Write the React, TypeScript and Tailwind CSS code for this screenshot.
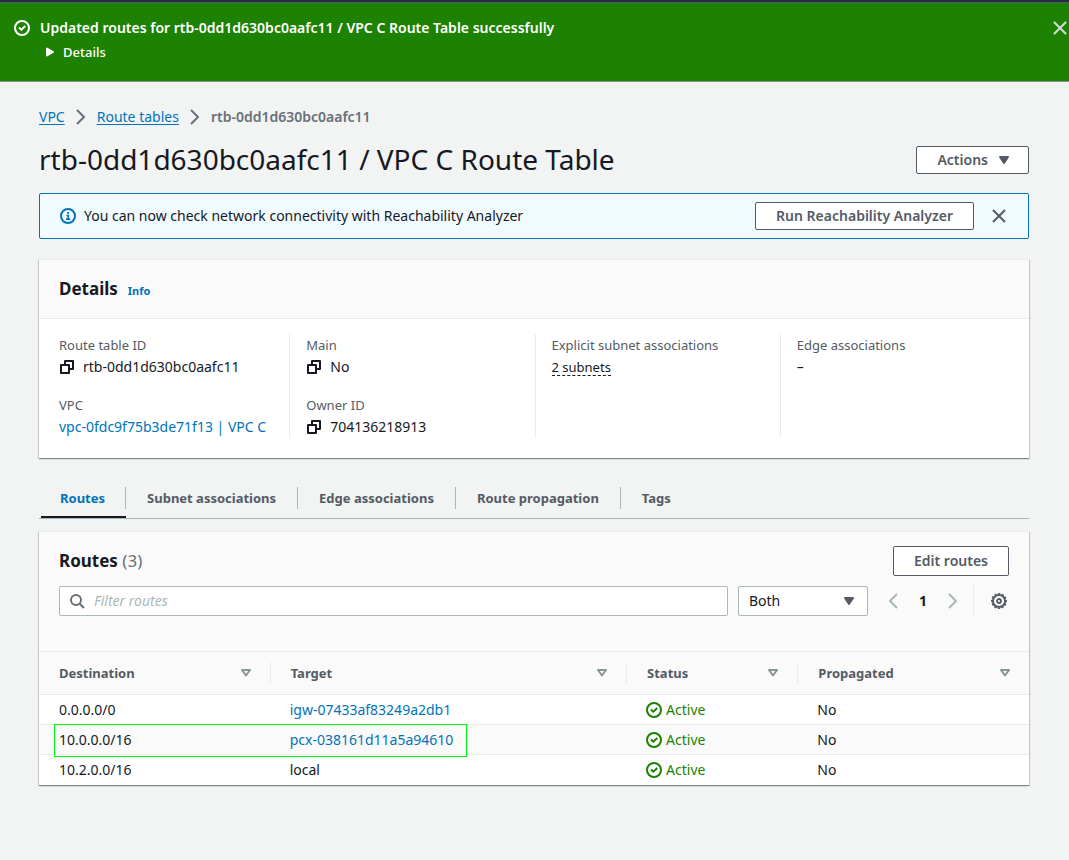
import type { ReactNode } from "react";

type IconProps = { children: ReactNode; className?: string; width?: number };

function Icon({ children, className = "", width = 2 }: IconProps) {
  return (
    <svg
      viewBox="0 0 16 16"
      className={`size-4 shrink-0 ${className}`}
      fill="none"
      stroke="currentColor"
      strokeWidth={width}
      strokeLinejoin="round"
      aria-hidden="true"
    >
      {children}
    </svg>
  );
}

const CheckCircle = ({ className = "" }: { className?: string }) => (
  <Icon className={className}>
    <circle cx="8" cy="8" r="7" />
    <path d="M4.9 7.6l2.4 2.1 4-3.6" strokeLinejoin="miter" />
  </Icon>
);

const Close = () => (
  <Icon>
    <path d="M2 2l12 12M14 2L2 14" />
  </Icon>
);

const Info = () => (
  <Icon className="text-[#0073bb]">
    <circle cx="8" cy="8" r="7" />
    <path d="M6 11.1h4.2M6.4 7.5H8.2V11M7 4.9h2" strokeWidth="1.6" strokeLinejoin="miter" />
  </Icon>
);

const Copy = () => (
  <Icon>
    <path d="M2 6h8v8H2z" />
    <path d="M6 6V2h8v8h-4" />
  </Icon>
);

const Chevron = ({ flip = false, className = "" }: { flip?: boolean; className?: string }) => (
  <Icon className={className}>
    <path d={flip ? "M12 1L5 8l7 7" : "M4 1l7 7-7 7"} />
  </Icon>
);

const CaretDown = ({ className = "" }: { className?: string }) => (
  <Icon className={className}>
    <path d="M4 5h8l-4 6z" fill="currentColor" />
  </Icon>
);

const SortCaret = () => (
  <Icon className="text-[#879596]">
    <path d="M4 5h8l-4 5.5z" />
  </Icon>
);

const Search = () => (
  <Icon className="text-[#687078]">
    <circle cx="7" cy="7" r="5" />
    <path d="M10.7 10.7L15 15" />
  </Icon>
);

const Gear = () => (
  <Icon width={2}>
    <circle cx="8" cy="8" r="6.1" />
    <circle cx="8" cy="8" r="7.3" strokeWidth="1.4" strokeDasharray="2.2 1.62" strokeDashoffset="1.1" />
    <circle cx="8" cy="8" r="2" strokeWidth="1.8" />
  </Icon>
);

const card =
  "border-t border-[#eaeded] bg-white shadow-[0_1px_1px_0_rgba(0,28,36,0.3),1px_1px_1px_0_rgba(0,28,36,0.15),-1px_1px_1px_0_rgba(0,28,36,0.15)]";
const button =
  "flex items-center justify-center rounded-[2px] border border-[#545b64] bg-white font-semibold text-[#545b64]";

function Field({ label, children }: { label: string; children: ReactNode }) {
  return (
    <div>
      <dt className="text-[13px] leading-[22px] text-[#545b64]">{label}</dt>
      <dd className="flex h-[22px] items-center">{children}</dd>
    </div>
  );
}

function Copyable({ text }: { text: string }) {
  return (
    <>
      <button type="button" aria-label={`Copy ${text}`} className="mr-2">
        <Copy />
      </button>
      {text}
    </>
  );
}

const tabs = ["Routes", "Subnet associations", "Edge associations", "Route propagation", "Tags"];

const columns = ["Destination", "Target", "Status", "Propagated"];

const routes = [
  { destination: "0.0.0.0/0", target: "igw-07433af83249a2db1", link: true, marked: false },
  { destination: "10.0.0.0/16", target: "pcx-038161d11a5a94610", link: true, marked: true },
  { destination: "10.2.0.0/16", target: "local", link: false, marked: false },
];

export default function App() {
  return (
    <div className="min-h-screen bg-[#f2f3f3] pb-8 font-['Noto_Sans',sans-serif] text-[14px] leading-[22px] text-[#16191f]">
      <div className="h-[3px] border-b border-[#545b64] bg-[#232f3e]" />
      <section className="flex h-[79px] items-start gap-2.5 border-b border-[#879596] bg-[#1d8102] pt-3.5 pl-3.5 text-white">
        <CheckCircle className="mt-[3px]" />
        <div className="flex-1">
          <p className="font-semibold">
            Updated routes for rtb-0dd1d630bc0aafc11 / VPC C Route Table successfully
          </p>
          <button type="button" className="mt-0.5 flex items-center gap-[5px] pl-0.5 text-[13px] leading-[22px] font-medium">
            <Icon>
              <path d="M5 4.5v7L11 8z" fill="currentColor" />
            </Icon>
            Details
          </button>
        </div>
        <button type="button" aria-label="Dismiss" className="mt-[3px] mr-px text-[#d5dbdb]">
          <Close />
        </button>
      </section>

      <main className="px-10">
        <div className="-ml-px pt-6">
          <nav aria-label="Breadcrumb" className="flex items-center gap-2">
            <a href="#vpc" className="text-[#0073bb] underline underline-offset-2">VPC</a>
            <Chevron className="text-[#687078]" />
            <a href="#route-tables" className="text-[#0073bb] underline underline-offset-2">Route tables</a>
            <Chevron className="text-[#687078]" />
            <span className="font-semibold text-[#687078]">rtb-0dd1d630bc0aafc11</span>
          </nav>
          <div className="mt-3.5 flex items-center justify-between">
            <h1 className="pb-0.5 text-[28px] leading-[34px]">rtb-0dd1d630bc0aafc11 / VPC C Route Table</h1>
            <button type="button" className={`${button} h-7 gap-2 pr-4 pl-5`}>
              Actions
              <CaretDown />
            </button>
          </div>
        </div>

        <section className="-ml-px mt-[15px] flex h-[46px] items-center rounded-[2px] border border-[#0073bb] bg-[#f1faff] pr-[21px] pl-5">
          <Info />
          <p className="ml-2 flex-1">You can now check network connectivity with Reachability Analyzer</p>
          <button type="button" className={`${button} h-7 px-5`}>
            Run Reachability Analyzer
          </button>
          <button type="button" aria-label="Dismiss" className="ml-[17px] text-[#545b64]">
            <Close />
          </button>
        </section>

        <section className={`${card} -ml-px mt-5`}>
          <header className="flex h-[59px] items-baseline gap-2.5 border-b border-[#eaeded] bg-[#fafafa] px-5 pt-[17px]">
            <h2 className="text-[17px] leading-6 font-bold">Details</h2>
            <a href="#info" className="text-[11px] leading-5 font-bold text-[#0073bb]">Info</a>
          </header>
          <dl className="grid grid-cols-4 divide-x divide-[#eaeded] pt-[15px] pr-[3px] pb-5 pl-1.5">
            <div className="space-y-4 pl-3.5">
              <Field label="Route table ID">
                <Copyable text="rtb-0dd1d630bc0aafc11" />
              </Field>
              <Field label="VPC">
                <a href="#vpc" className="text-[#0073bb]">vpc-0fdc9f75b3de71f13 | VPC C</a>
              </Field>
            </div>
            <div className="space-y-4 pl-4">
              <Field label="Main">
                <Copyable text="No" />
              </Field>
              <Field label="Owner ID">
                <Copyable text="704136218913" />
              </Field>
            </div>
            <div className="pl-4">
              <Field label="Explicit subnet associations">
                <button type="button" className="border-b border-dashed border-[#16191f] text-[13px] leading-4">
                  2 subnets
                </button>
              </Field>
            </div>
            <div className="pl-4">
              <Field label="Edge associations">–</Field>
            </div>
          </dl>
        </section>

        <div role="tablist" className="-ml-px mt-6 flex border-b border-[#aab7b8] text-[13px]">
          {tabs.map((tab, i) => (
            <button
              key={tab}
              type="button"
              role="tab"
              aria-selected={i === 0}
              className={`flex h-9 items-start pt-[5px] font-bold ${
                i === 0 ? "ml-0.5 border-b-2 border-[#16191f] text-[#0073bb]" : "text-[#545b64]"
              }`}
            >
              <span
                className={`flex h-[22px] items-center ${i === 0 ? "pr-5 pl-[19px]" : "px-[21px]"} ${
                  i < tabs.length - 1 ? "border-r border-[#aab7b8]" : ""
                }`}
              >
                {tab}
              </span>
            </button>
          ))}
        </div>

        <section className={`${card} -ml-px mt-3`}>
          <div className="bg-[#fafafa] px-5 pt-3.5 pb-[35px]">
            <div className="flex items-center justify-between">
              <h2 className="text-[17px] leading-6 font-bold">
                Routes <span className="font-normal text-[#687078]">(3)</span>
              </h2>
              <button type="button" className={`${button} h-[30px] px-5`}>
                Edit routes
              </button>
            </div>
            <div className="mt-2.5 flex items-center">
              <label className="flex h-[30px] flex-1 items-center gap-[9px] rounded-[2px] border border-[#aab7b8] bg-white px-[9px]">
                <Search />
                <input
                  type="text"
                  aria-label="Filter routes"
                  placeholder="Filter routes"
                  className="min-w-0 flex-1 outline-none placeholder:text-[#aab7b8] placeholder:italic"
                />
              </label>
              <div className="relative ml-2.5 w-[130px]">
                <select
                  aria-label="Route type"
                  className="h-[30px] w-full appearance-none rounded-[2px] border border-[#aab7b8] bg-white pl-2.5"
                >
                  <option>Both</option>
                </select>
                <CaretDown className="pointer-events-none absolute top-[7px] right-[11px] text-[#545b64]" />
              </div>
              <div className="ml-[17px] flex items-center gap-[18px] text-[#aab7b8]">
                <button type="button" aria-label="Previous page">
                  <Chevron flip />
                </button>
                <span className="font-bold text-[#16191f]">1</span>
                <button type="button" aria-label="Next page">
                  <Chevron />
                </button>
              </div>
              <div className="ml-3 flex h-[30px] items-center border-l border-[#eaeded] pr-0.5 pl-[17px] text-[#545b64]">
                <button type="button" aria-label="Preferences">
                  <Gear />
                </button>
              </div>
            </div>
          </div>
          <table className="w-full table-fixed text-left">
            <colgroup>
              <col className="w-[23.4%]" />
              <col className="w-[36%]" />
              <col className="w-[17.3%]" />
              <col />
            </colgroup>
            <thead>
              <tr className="h-[43px] border-y border-[#eaeded] bg-[#fafafa] text-[13px] text-[#545b64]">
                {columns.map((name, i) => (
                  <th key={name} scope="col" className="p-0 font-bold">
                    <div
                      className={`flex h-[22px] items-center justify-between pr-4 pl-5 first:pl-5 ${
                        i < columns.length - 1 ? "border-r border-[#eaeded]" : ""
                      }`}
                    >
                      {name}
                      <button type="button" aria-label={`Sort by ${name}`}>
                        <SortCaret />
                      </button>
                    </div>
                  </th>
                ))}
              </tr>
            </thead>
            <tbody>
              {routes.map((route) => (
                <tr
                  key={route.destination}
                  className={`h-[30px] border-b border-[#eaeded] last:border-b-0 ${route.marked ? "bg-[#fafafa]" : ""}`}
                >
                  <td className="relative p-0 pl-5">
                    {route.marked && (
                      <span className="pointer-events-none absolute -top-px left-[15px] h-[33px] w-[413px] border border-[#00f010]" />
                    )}
                    {route.destination}
                  </td>
                  <td className="p-0 pl-[19px]">
                    {route.link ? (
                      <a href={`#${route.target}`} className="text-[#0073bb]">{route.target}</a>
                    ) : (
                      route.target
                    )}
                  </td>
                  <td className="p-0 pl-[19px]">
                    <span className="flex items-center gap-1 text-[#1d8102]">
                      <CheckCircle />
                      Active
                    </span>
                  </td>
                  <td className="p-0 pl-[19px]">No</td>
                </tr>
              ))}
            </tbody>
          </table>
        </section>
      </main>
    </div>
  );
}
